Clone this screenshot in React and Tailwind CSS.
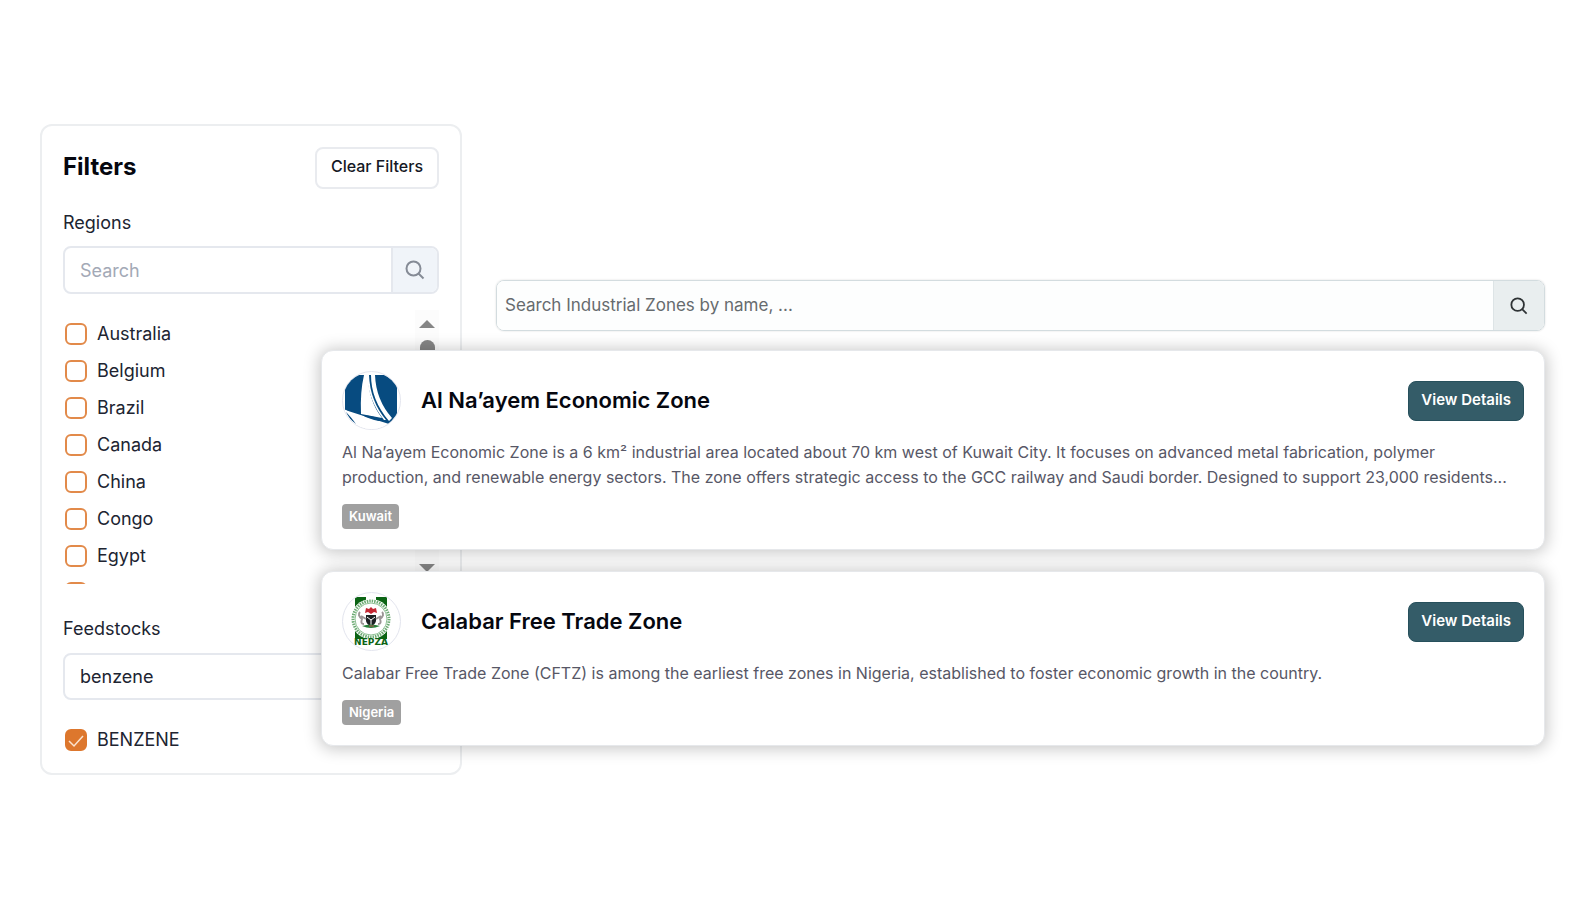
import React, { useState } from "react";

const regions = ["Australia", "Belgium", "Brazil", "Canada", "China", "Congo", "Egypt", ""];

const zones = [
  {
    name: "Al Na’ayem Economic Zone",
    country: "Kuwait",
    logo: "sail",
    description:
      "Al Na’ayem Economic Zone is a 6 km² industrial area located about 70 km west of Kuwait City. It focuses on advanced metal fabrication, polymer production, and renewable energy sectors. The zone offers strategic access to the GCC railway and Saudi border. Designed to support 23,000 residents...",
  },
  {
    name: "Calabar Free Trade Zone",
    country: "Nigeria",
    logo: "nepza",
    description:
      "Calabar Free Trade Zone (CFTZ) is among the earliest free zones in Nigeria, established to foster economic growth in the country.",
  },
];

const SearchIcon = ({ className }) => (
  <svg viewBox="0 0 20 20" fill="none" stroke="currentColor" className={className} aria-hidden="true">
    <circle cx="8.5" cy="8.5" r="7" />
    <path d="M13.5 13.5L18.5 18.5" />
  </svg>
);

const SailLogo = () => (
  <svg viewBox="0 0 57 57" className="w-full h-full" aria-hidden="true">
    <path d="M14 3H42Q49 7 54 14V43L46 52L2 38V14Q7 7 14 3Z" fill="#074b80" />
    <path d="M21 3H25Q25 28 39 46L18 42Q17 20 21 3Z" fill="#fff" />
    <path d="M28 3H32Q33 28 49 46L46 49Q28 28 28 3Z" fill="#fff" />
    <path d="M24 3H26Q27 29 43 48L41 48Q25 28 24 3Z" fill="#fff" />
    <path d="M1 37Q12 44 24 48Q34 52 44 53L36 57H10L1 45Z" fill="#fff" />
    <path d="M3 40Q6 47 13 52Q8 45 3 40Z" fill="#074b80" />
    <path d="M19 43Q32 44 43 49L36 49Q26 47 19 43Z" fill="#074b80" />
  </svg>
);

const NepzaLogo = () => (
  <svg viewBox="0 0 57 57" className="w-full h-full" aria-hidden="true">
    <path d="M12 4H23V46H12ZM33 4H44V46H33Z" fill="#0b6414" />
    <circle cx="28" cy="26" r="20" fill="#fff" />
    <circle cx="28" cy="26" r="18" fill="none" stroke="#6dab74" strokeWidth="3" strokeDasharray="1.5 1" />
    <circle cx="28" cy="26" r="16" fill="#fff" stroke="#8fc095" />
    <path d="M22 20L23 15L26 16L28 14L30 16L33 15L34 20L31 19L28 21L25 19Z" fill="#c32733" />
    <path d="M23 22H33V28Q32 32 28 33Q24 32 23 28Z" fill="#1c2224" />
    <path d="M24 24L28 27L32 24M28 27V33" stroke="#fff" fill="none" />
    <path d="M21 31Q17 31 19 26Q14 22 17 19M18 23L23 26M35 31Q39 31 37 26Q42 22 39 19M38 23L33 26" stroke="#9b9696" strokeWidth="2" fill="none" />
    <path d="M19 33Q28 30 37 33Q28 37 19 33Z" fill="#28813a" />
    <path d="M26 33H31" stroke="#b65250" />
    <text x="28" y="52" textAnchor="middle" fontFamily="DejaVu Sans" fontWeight="bold" fontSize="9" fill="#0b6414">
      NEPZA
    </text>
  </svg>
);

const Checkbox = ({ label, checked, onChange }) => (
  <label className="flex items-center gap-[10px] h-[37px] shrink-0 text-[18px] text-[#202431] cursor-pointer">
    <span className="relative flex ml-[2px]">
      <input
        type="checkbox"
        checked={checked}
        onChange={onChange}
        className="appearance-none w-[22px] h-[22px] rounded-md border-2 border-[#e28a4a] bg-white checked:bg-[#dd772d] checked:border-[#dd772d]"
      />
      {checked && (
        <svg viewBox="0 0 22 22" fill="none" className="absolute inset-0 pointer-events-none" aria-hidden="true">
          <path d="M4 12L9 17L18 7" stroke="#fbe3cf" strokeWidth="1.500" />
        </svg>
      )}
    </span>
    {label}
  </label>
);

const ZoneCard = ({ zone }) => (
  <article className="bg-white border border-[#e6e8eb] rounded-xl p-5 shadow-[0_1px_16px_2px_rgba(0,0,0,0.22)]">
    <div className="flex items-center">
      <div className="w-[59px] h-[59px] shrink-0 rounded-full border border-[#e3e5ee] overflow-hidden">
        {zone.logo === "sail" ? <SailLogo /> : <NepzaLogo />}
      </div>
      <h2 className="ml-5 flex-1 text-[22px] leading-7 font-semibold text-[#05070f] pb-px">{zone.name}</h2>
      <button className="h-10 px-3 rounded-lg bg-[#345c68] border border-[#27505c] text-[15px] font-semibold text-white">
        View Details
      </button>
    </div>
    <p className="mt-[10px] text-[16px] leading-[25px] text-[#575766]">{zone.description}</p>
    <span className="mt-[14px] flex w-fit items-center h-[25px] px-[7px] rounded bg-[#a0a0a0] text-[13px] font-semibold text-white">
      {zone.country}
    </span>
  </article>
);

const App = () => {
  const [selected, setSelected] = useState([]);
  const [benzene, setBenzene] = useState(true);
  const [feedstock, setFeedstock] = useState("benzene");

  const toggleRegion = (index) => {
    setSelected(selected.includes(index) ? selected.filter((i) => i !== index) : [...selected, index]);
  };

  return (
    <div className="min-h-screen bg-white flex items-start pt-[124px] pb-16 pl-10 pr-[39px] font-['Inter',sans-serif]">
      <aside className="w-[422px] shrink-0 border-2 border-[#eceef0] rounded-xl px-[21px] pt-[21px] pb-[15px]">
        <div className="flex items-center justify-between">
          <h1 className="text-[24px] font-bold text-[#05070f] pb-[2px]">Filters</h1>
          <button className="h-[42px] px-[14px] border-2 border-[#e9ebef] rounded-lg text-[16px] font-medium text-[#151824] pb-1">
            Clear Filters
          </button>
        </div>

        <label htmlFor="region-search" className="block mt-5 text-[18px] leading-7 text-[#202431]">
          Regions
        </label>
        <div className="mt-[9px] flex h-12 border-2 border-[#e5e8ee] rounded-lg overflow-hidden">
          <input
            id="region-search"
            type="text"
            placeholder="Search"
            className="flex-1 min-w-0 px-[15px] text-[18px] text-[#202431] placeholder:text-[#a3a9b6] outline-none"
          />
          <button aria-label="Search regions" className="w-[46px] flex items-center justify-center bg-[#f0f4f9] border-l-2 border-[#e5e8ee] text-[#858b96]">
            <SearchIcon className="w-5 h-5 stroke-2" />
          </button>
        </div>

        <div className="mt-4 h-[274px] flex justify-between overflow-hidden">
          <div className="flex flex-col pt-[5px]">
            {regions.map((region, index) => (
              <Checkbox
                key={index}
                label={region}
                checked={selected.includes(index)}
                onChange={() => toggleRegion(index)}
              />
            ))}
          </div>
          {/* Scrollbar */}
          <div className="w-6 flex flex-col items-center bg-[#fcfcfc] pt-[10px] pb-3">
            <svg viewBox="0 0 16 8" className="w-4 h-2" aria-hidden="true">
              <path d="M0 8L8 0L16 8Z" fill="#858585" />
            </svg>
            <div className="mt-3 w-[15px] h-20 rounded-full bg-[#858585]"></div>
            <svg viewBox="0 0 16 8" className="mt-auto w-4 h-2" aria-hidden="true">
              <path d="M0 0L8 8L16 0Z" fill="#858585" />
            </svg>
          </div>
        </div>

        <label htmlFor="feedstock" className="block mt-[31px] text-[18px] leading-7 text-[#202431]">
          Feedstocks
        </label>
        <input
          id="feedstock"
          type="text"
          value={feedstock}
          onChange={(e) => setFeedstock(e.target.value)}
          className="mt-[10px] mb-[21px] w-full h-[47px] px-[15px] border-2 border-[#e5e8ee] rounded-lg text-[18px] text-[#202431] outline-none"
        />
        <Checkbox label="BENZENE" checked={benzene} onChange={() => setBenzene(!benzene)} />
      </aside>

      <main className="flex-1 min-w-0 pt-[156px]">
        <div className="ml-[34px] flex h-[51px] border border-[#d3dcdf] rounded-lg overflow-hidden shadow-[0_0_2px_rgba(0,0,0,0.15)]">
          <input
            type="text"
            aria-label="Search industrial zones"
            placeholder="Search Industrial Zones by name, ..."
            className="flex-1 min-w-0 px-2 text-[17px] bg-[#fdfefe] placeholder:text-[#666b6e] outline-none"
          />
          <button aria-label="Search" className="w-[51px] flex items-center justify-center bg-[#e9eeef] border-l border-[#dde4e6] text-[#2e3335]">
            <SearchIcon className="w-[18px] h-[18px] stroke-2" />
          </button>
        </div>

        {/* Results overlap the filter panel */}
        <div className="relative mt-[19px] -ml-[141px] flex flex-col gap-[21px]">
          {zones.map((zone) => (
            <ZoneCard key={zone.name} zone={zone} />
          ))}
        </div>
      </main>
    </div>
  );
};

export default App;
